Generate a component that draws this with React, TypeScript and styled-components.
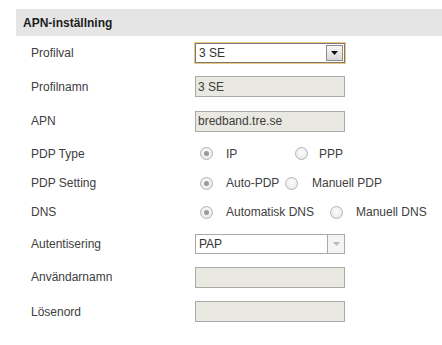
import { type FC } from "react";
import styled, { createGlobalStyle } from "styled-components";

const GlobalStyle = createGlobalStyle`
  html, body {
    margin: 0;
    padding: 0;
    background: #fff;
  }
  body {
    font-family: "Liberation Sans", Arial, sans-serif;
    font-size: 12px;
    color: #3a3a3a;
  }
`;

const Page = styled.div`
  padding: 9px 0 0 16px;
  width: 442px;
  box-sizing: border-box;
`;

const Header = styled.div`
  height: 27px;
  display: flex;
  align-items: center;
  padding-left: 7px;
  background: #e5e5e5;
  font-weight: bold;
  color: #1e1e1e;
`;

const Form = styled.div`
  padding-left: 15px;
`;

const Row = styled.div<{ $h: number }>`
  display: grid;
  grid-template-columns: 164px 1fr;
  align-items: center;
  height: ${(p) => p.$h}px;
`;

const Label = styled.span`
  color: #404040;
`;

const TextField = styled.input`
  width: 150px;
  height: 21px;
  box-sizing: border-box;
  margin: 0;
  padding: 0 2px;
  border: 1px solid #a9a9a9;
  background: #e9e8e1;
  font-family: "Liberation Sans", Arial, sans-serif;
  font-size: 12px;
  color: #404040;
  outline: none;
`;

const SelectBox = styled.div<{ $focus?: boolean }>`
  width: 150px;
  height: 20px;
  box-sizing: border-box;
  display: flex;
  align-items: center;
  justify-content: space-between;
  padding-left: 3px;
  background: #fff;
  border: 1px solid ${(p) => (p.$focus ? "#7a7a7a" : "#a9a9a9")};
  box-shadow: ${(p) => (p.$focus ? "0 0 0 1px #ebc97c" : "none")};
  color: #333;
`;

const ArrowButton = styled.span<{ $disabled?: boolean }>`
  width: 17px;
  height: 100%;
  box-sizing: border-box;
  display: flex;
  align-items: center;
  justify-content: center;
  border-left: 1px solid ${(p) => (p.$disabled ? "#a9a9a9" : "#7a7a7a")};
  background: ${(p) =>
    p.$disabled ? "#f4f4f4" : "linear-gradient(#f6f6f6, #d9d9d9)"};
  ${(p) =>
    p.$disabled
      ? ""
      : "margin: 1px; height: calc(100% - 2px); border: 1px solid #8c8c8c;"}
`;

const Options = styled.div`
  display: flex;
  align-items: center;
  padding-left: 5px;
`;

const Option = styled.label<{ $w?: number; $gap?: number }>`
  display: flex;
  align-items: center;
  gap: ${(p) => p.$gap ?? 13}px;
  ${(p) => (p.$w ? `width: ${p.$w}px;` : "")}
  color: #404040;
`;

const Radio = styled.span<{ $checked?: boolean }>`
  width: 13px;
  height: 13px;
  box-sizing: border-box;
  border-radius: 50%;
  border: 1px solid #b4b4b4;
  background: radial-gradient(circle at 50% 40%, #fcfcfc 0%, #e4e4e4 100%);
  display: flex;
  align-items: center;
  justify-content: center;
  &::after {
    content: "";
    width: 5px;
    height: 5px;
    border-radius: 50%;
    background: ${(p) => (p.$checked ? "#9a9a9a" : "transparent")};
  }
`;

const Caret: FC<{ color: string }> = ({ color }) => (
  <svg width="7" height="4" viewBox="0 0 7 4">
    <path d="M0 0h7L3.5 4z" fill={color} />
  </svg>
);

const App: FC = () => (
  <>
    <GlobalStyle />
    <Page>
      <Header>APN-inställning</Header>
      <Form>
        <Row $h={33}>
          <Label>Profilval</Label>
          <SelectBox $focus>
            <span>3 SE</span>
            <ArrowButton>
              <Caret color="#111" />
            </ArrowButton>
          </SelectBox>
        </Row>
        <Row $h={35}>
          <Label>Profilnamn</Label>
          <TextField readOnly defaultValue="3 SE" />
        </Row>
        <Row $h={34}>
          <Label>APN</Label>
          <TextField readOnly defaultValue="bredband.tre.se" />
        </Row>
        <Row $h={31}>
          <Label>PDP Type</Label>
          <Options>
            <Option $w={95}>
              <Radio $checked />
              IP
            </Option>
            <Option $gap={11}>
              <Radio />
              PPP
            </Option>
          </Options>
        </Row>
        <Row $h={28}>
          <Label>PDP Setting</Label>
          <Options>
            <Option $w={85}>
              <Radio $checked />
              Auto-PDP
            </Option>
            <Option $gap={14}>
              <Radio />
              Manuell PDP
            </Option>
          </Options>
        </Row>
        <Row $h={30}>
          <Label>DNS</Label>
          <Options>
            <Option $w={130}>
              <Radio $checked />
              Automatisk DNS
            </Option>
            <Option>
              <Radio />
              Manuell DNS
            </Option>
          </Options>
        </Row>
        <Row $h={33}>
          <Label>Autentisering</Label>
          <SelectBox>
            <span>PAP</span>
            <ArrowButton $disabled>
              <Caret color="#b8b8b8" />
            </ArrowButton>
          </SelectBox>
        </Row>
        <Row $h={34}>
          <Label>Användarnamn</Label>
          <TextField readOnly defaultValue="" />
        </Row>
        <Row $h={35}>
          <Label>Lösenord</Label>
          <TextField type="password" readOnly defaultValue="" />
        </Row>
      </Form>
    </Page>
  </>
);

export default App;
